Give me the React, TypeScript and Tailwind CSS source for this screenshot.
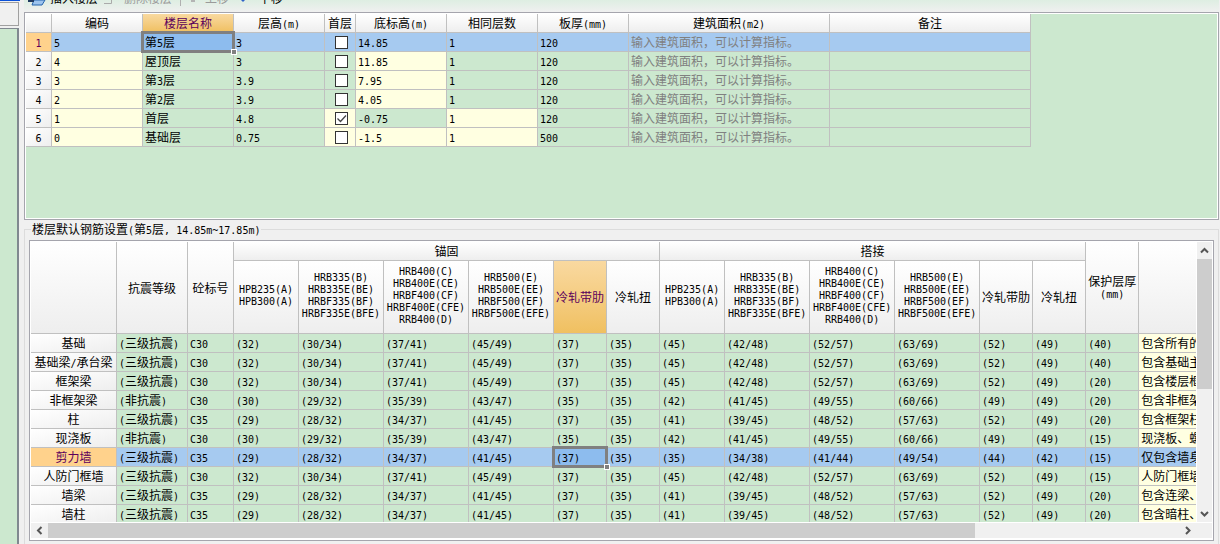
import React, { useState } from 'react';
import clsx from 'clsx';

interface Floor {
    code: string;
    name: string;
    height: string;
    isFirst: boolean;
    bottom: string;
    same: string;
    slab: string;
    editable: string[];
}

interface RebarRow {
    name: string;
    grade: string;
    concrete: string;
    values: string[];
    note: string;
}

const FLOORS: Floor[] = [
    { code: '5', name: '第5层', height: '3', isFirst: false, bottom: '14.85', same: '1', slab: '120', editable: [] },
    { code: '4', name: '屋顶层', height: '3', isFirst: false, bottom: '11.85', same: '1', slab: '120', editable: ['code', 'bottom'] },
    { code: '3', name: '第3层', height: '3.9', isFirst: false, bottom: '7.95', same: '1', slab: '120', editable: ['code', 'bottom'] },
    { code: '2', name: '第2层', height: '3.9', isFirst: false, bottom: '4.05', same: '1', slab: '120', editable: ['code', 'bottom'] },
    { code: '1', name: '首层', height: '4.8', isFirst: true, bottom: '-0.75', same: '1', slab: '120', editable: ['code', 'isFirst', 'same'] },
    { code: '0', name: '基础层', height: '0.75', isFirst: false, bottom: '-1.5', same: '1', slab: '500', editable: ['code', 'isFirst', 'bottom', 'same'] },
];

const A = ['(32)', '(30/34)', '(37/41)', '(45/49)', '(37)', '(35)', '(45)', '(42/48)', '(52/57)', '(63/69)', '(52)', '(49)'];
const B = ['(30)', '(29/32)', '(35/39)', '(43/47)', '(35)', '(35)', '(42)', '(41/45)', '(49/55)', '(60/66)', '(49)', '(49)'];
const C = ['(29)', '(28/32)', '(34/37)', '(41/45)', '(37)', '(35)', '(41)', '(39/45)', '(48/52)', '(57/63)', '(52)', '(49)'];
const WALL = ['(29)', '(28/32)', '(34/37)', '(41/45)', '(37)', '(35)', '(35)', '(34/38)', '(41/44)', '(49/54)', '(44)', '(42)'];

const REBAR: RebarRow[] = [
    { name: '基础', grade: '(三级抗震)', concrete: 'C30', values: [...A, '(40)'], note: '包含所有的' },
    { name: '基础梁/承台梁', grade: '(三级抗震)', concrete: 'C30', values: [...A, '(40)'], note: '包含基础主' },
    { name: '框架梁', grade: '(三级抗震)', concrete: 'C30', values: [...A, '(20)'], note: '包含楼层框' },
    { name: '非框架梁', grade: '(非抗震)', concrete: 'C30', values: [...B, '(20)'], note: '包含非框架' },
    { name: '柱', grade: '(三级抗震)', concrete: 'C35', values: [...C, '(20)'], note: '包含框架柱' },
    { name: '现浇板', grade: '(非抗震)', concrete: 'C30', values: [...B, '(15)'], note: '现浇板、螺' },
    { name: '剪力墙', grade: '(三级抗震)', concrete: 'C35', values: [...WALL, '(15)'], note: '仅包含墙身' },
    { name: '人防门框墙', grade: '(三级抗震)', concrete: 'C30', values: [...A, '(15)'], note: '人防门框墙' },
    { name: '墙梁', grade: '(三级抗震)', concrete: 'C35', values: [...C, '(20)'], note: '包含连梁、' },
    { name: '墙柱', grade: '(三级抗震)', concrete: 'C35', values: [...C, '(20)'], note: '包含暗柱、' },
];

const STEELS = [
    ['HPB235(A)', 'HPB300(A)'],
    ['HRB335(B)', 'HRB335E(BE)', 'HRBF335(BF)', 'HRBF335E(BFE)'],
    ['HRB400(C)', 'HRB400E(CE)', 'HRBF400(CF)', 'HRBF400E(CFE)', 'RRB400(D)'],
    ['HRB500(E)', 'HRB500E(EE)', 'HRBF500(EF)', 'HRBF500E(EFE)'],
    ['冷轧带肋'],
    ['冷轧扭'],
];

const HEAD = 'border-r border-b border-[#c0c0c0] p-0 font-normal';
const PLAIN_HEAD = 'bg-linear-to-b from-white to-[#eeeeee]';
const ACTIVE_HEAD = 'bg-linear-to-b from-[#f9d9a0] to-[#f0c060] text-[#5b005b]';
const ROW_HEAD = 'bg-linear-to-br from-white to-[#eeeeee]';
const ACTIVE_ROW_HEAD = 'bg-[#ffd28c] text-[#5b005b]';
const CELL = 'h-[19px] border-r border-b border-[#c0c0c0] py-0 pr-0 pl-0.5 whitespace-nowrap';

// Chinese runs are 12px wide per glyph, latin runs half of that
const Text = ({ children }: { children: string }) => (
    <>
        {children.split(/([\x20-\x7e]+)/).filter(Boolean).map((part, i) =>
            /^[\x20-\x7e]/.test(part) ? (
                <span key={i} className="font-['DejaVu_Sans_Mono',monospace] text-[10px] leading-none whitespace-pre">{part}</span>
            ) : (
                <span key={i}>{part}</span>
            )
        )}
    </>
);

const ActiveFrame = () => (
    <>
        <span className="pointer-events-none absolute -inset-0.5 z-10 border-3 border-[#808080]" />
        <span className="pointer-events-none absolute -right-1 -bottom-1 z-10 size-1.5 border border-white bg-[#808080]" />
    </>
);

const Chevron = ({ d }: { d: string }) => (
    <svg width="9" height="9" viewBox="0 0 9 9" fill="none" stroke="#555" strokeWidth="2">
        <path d={d} />
    </svg>
);

const Toolbar = () => (
    <div className="flex h-3 shrink-0 items-end overflow-hidden bg-linear-to-b from-[#deeee2] to-[#f0f0f0] pb-1.5 pl-1 leading-4">
        <button className="flex h-4 items-end gap-1">
            <svg width="18" height="14" viewBox="0 0 18 14">
                <path d="M7 2h9l-3 5H4z" fill="#dcebfa" stroke="#2465ad" />
                <path d="M6 8h11l-3 5H4z" fill="#9cc4ee" stroke="#2465ad" />
                <path d="M0 8h6v2H0z" fill="#203a60" />
            </svg>
            <span>插入楼层</span>
        </button>
        <button className="ml-1.5 flex h-4 items-end gap-3 text-[#9a9a9a]">
            <svg width="8" height="14" viewBox="0 0 8 14">
                <path d="M0 11.500h7.500V2" fill="none" stroke="#aaa" />
            </svg>
            <span>删除楼层</span>
        </button>
        <span className="mr-2 ml-2 h-4 w-px shrink-0 bg-[#b0b0b0]" />
        <button className="flex h-4 items-end gap-2 text-[#9a9a9a]">
            <svg width="8" height="14" viewBox="0 0 8 14">
                <path d="M2 2h4v8H2z" fill="#b4b4b4" />
            </svg>
            <span>上移</span>
        </button>
        <button className="ml-2.5 flex h-4 items-end gap-3">
            <svg width="8" height="14" viewBox="0 0 8 14">
                <path d="M2 0h4v6h2l-4 4-4-4h2z" fill="#2f62c8" />
            </svg>
            <span>下移</span>
        </button>
    </div>
);

const FloorTable = () => {
    const [floors, setFloors] = useState<Floor[]>(FLOORS);
    const heads = ['编码', '楼层名称', '层高(m)', '首层', '底标高(m)', '相同层数', '板厚(mm)', '建筑面积(m2)', '备注'];

    const handleToggle = (index: number) => {
        setFloors(floors.map((f, i) => ({ ...f, isFirst: i === index })));
    };

    return (
        <div className="h-52 shrink-0 overflow-hidden border border-[#a5a5ad] bg-white p-px">
            <div className="h-full bg-[#cce8cf]">
                <table className="w-[1005px] table-fixed border-separate border-spacing-0 leading-4">
                    <colgroup>
                        <col className="w-[26px]" />
                        <col className="w-[91px]" />
                        <col className="w-[91px]" />
                        <col className="w-[91px]" />
                        <col className="w-[31px]" />
                        <col className="w-[91px]" />
                        <col className="w-[91px]" />
                        <col className="w-[91px]" />
                        <col className="w-[201px]" />
                        <col className="w-[201px]" />
                    </colgroup>
                    <thead>
                        <tr>
                            <th className={clsx(HEAD, PLAIN_HEAD, 'h-[19px]')}></th>
                            {heads.map((head, i) => (
                                <th key={head} className={clsx(HEAD, 'h-[19px]', i === 1 ? ACTIVE_HEAD : PLAIN_HEAD)}>
                                    <Text>{head}</Text>
                                </th>
                            ))}
                        </tr>
                    </thead>
                    <tbody>
                        {floors.map((floor, i) => {
                            const bg = (key: string) =>
                                i === 0 ? 'bg-[#a6caf0]' : floor.editable.includes(key) ? 'bg-[#ffffe1]' : 'bg-[#cce8cf]';
                            return (
                                <tr key={floor.code}>
                                    <th className={clsx(HEAD, i === 0 ? ACTIVE_ROW_HEAD : ROW_HEAD)}>
                                        <Text>{String(i + 1)}</Text>
                                    </th>
                                    <td className={clsx(CELL, bg('code'))}><Text>{floor.code}</Text></td>
                                    <td className={clsx(CELL, i === 0 ? 'relative bg-[#8dbcee]' : bg('name'))}>
                                        <Text>{floor.name}</Text>
                                        {i === 0 && <ActiveFrame />}
                                    </td>
                                    <td className={clsx(CELL, bg('height'))}><Text>{floor.height}</Text></td>
                                    <td className={clsx(CELL, bg('isFirst'))}>
                                        <label className="grid place-items-center">
                                            <input
                                                type="checkbox"
                                                aria-label={`${floor.name} 首层`}
                                                checked={floor.isFirst}
                                                onChange={() => handleToggle(i)}
                                                className="col-start-1 row-start-1 size-[13px] appearance-none border border-[#333] bg-white"
                                            />
                                            {floor.isFirst && (
                                                <svg className="pointer-events-none col-start-1 row-start-1" width="13" height="13" viewBox="0 0 13 13">
                                                    <path d="M2.500 6.500l3 3 5.500-6" fill="none" stroke="#444" strokeWidth="1.300" />
                                                </svg>
                                            )}
                                        </label>
                                    </td>
                                    <td className={clsx(CELL, bg('bottom'))}><Text>{floor.bottom}</Text></td>
                                    <td className={clsx(CELL, bg('same'))}><Text>{floor.same}</Text></td>
                                    <td className={clsx(CELL, bg('slab'))}><Text>{floor.slab}</Text></td>
                                    <td className={clsx(CELL, bg('area'), 'text-[#808080]')}>输入建筑面积，可以计算指标。</td>
                                    <td className={clsx(CELL, bg('note'))}></td>
                                </tr>
                            );
                        })}
                    </tbody>
                </table>
            </div>
        </div>
    );
};

const RebarTable = () => (
    <table className="w-full table-fixed border-separate border-spacing-0 leading-4">
        <colgroup>
            <col className="w-[86px]" />
            <col className="w-[71px]" />
            <col className="w-[46px]" />
            <col className="w-[65px]" />
            <col className="w-[85px]" />
            <col className="w-[85px]" />
            <col className="w-[85px]" />
            <col className="w-[53px]" />
            <col className="w-[53px]" />
            <col className="w-[65px]" />
            <col className="w-[85px]" />
            <col className="w-[85px]" />
            <col className="w-[85px]" />
            <col className="w-[53px]" />
            <col className="w-[53px]" />
            <col className="w-[53px]" />
            <col />
        </colgroup>
        <thead className="leading-3">
            <tr>
                <th rowSpan={2} className={clsx(HEAD, PLAIN_HEAD)}></th>
                <th rowSpan={2} className={clsx(HEAD, PLAIN_HEAD)}>抗震等级</th>
                <th rowSpan={2} className={clsx(HEAD, PLAIN_HEAD)}>砼标号</th>
                <th colSpan={6} className={clsx(HEAD, PLAIN_HEAD, 'h-[19px]')}>锚固</th>
                <th colSpan={6} className={clsx(HEAD, PLAIN_HEAD, 'h-[19px]')}>搭接</th>
                <th rowSpan={2} className={clsx(HEAD, PLAIN_HEAD)}>保护层厚<br /><Text>(mm)</Text></th>
                <th rowSpan={2} className={clsx(HEAD, PLAIN_HEAD, 'border-r-0')}></th>
            </tr>
            <tr>
                {[...STEELS, ...STEELS].map((lines, i) => (
                    <th key={i} className={clsx(HEAD, 'h-[73px] whitespace-nowrap', i === 4 ? ACTIVE_HEAD : PLAIN_HEAD)}>
                        {lines.map(line => (
                            <div key={line} className="flex h-3 justify-center"><Text>{line}</Text></div>
                        ))}
                    </th>
                ))}
            </tr>
        </thead>
        <tbody>
            {REBAR.map(row => {
                const active = row.name === '剪力墙';
                const bg = active ? 'bg-[#a6caf0]' : 'bg-[#cce8cf]';
                return (
                    <tr key={row.name}>
                        <th className={clsx(HEAD, 'whitespace-nowrap', active ? ACTIVE_ROW_HEAD : ROW_HEAD)}>
                            <Text>{row.name}</Text>
                        </th>
                        <td className={clsx(CELL, bg)}><Text>{row.grade}</Text></td>
                        <td className={clsx(CELL, bg)}><Text>{row.concrete}</Text></td>
                        {row.values.map((value, i) => (
                            <td key={i} className={clsx(CELL, active && i === 4 ? 'relative bg-[#8dbcee]' : bg)}>
                                <Text>{value}</Text>
                                {active && i === 4 && <ActiveFrame />}
                            </td>
                        ))}
                        <td className={clsx(CELL, 'overflow-hidden border-r-0', active ? 'bg-[#a6caf0]' : 'bg-[#ffffe1]')}>{row.note}</td>
                    </tr>
                );
            })}
        </tbody>
    </table>
);

const App = () => (
    <div className="flex h-screen overflow-hidden bg-[#f0f0f0] font-['Noto_Sans_CJK_SC',sans-serif] text-xs text-black">
        <aside className="flex w-5 shrink-0 flex-col border-t border-[#0a50d8]">
            <div className="mt-px h-6 w-[19px] border-y border-r border-[#a0a0a0] bg-[#f0f0f0]" />
            <div className="mt-0.5 w-[19px] flex-1 border-t border-r-2 border-[#808890] bg-[#cce8cf]" />
        </aside>
        <main className="flex min-w-0 flex-1 flex-col pr-px pl-1">
            <Toolbar />
            <FloorTable />
            <fieldset className="mt-0.5 flex min-h-0 min-w-0 flex-1 flex-col border-x border-t border-[#dcdcdc] px-1 pt-1 pb-[3px]">
                <legend className="ml-0.5 px-px leading-[14px]">
                    <Text>楼层默认钢筋设置(第5层, 14.85m~17.85m)</Text>
                </legend>
                <div className="grid min-h-0 flex-1 grid-cols-[minmax(0,1fr)_16px] grid-rows-[minmax(0,1fr)_16px] gap-y-px border border-[#a5a5ad] bg-white p-px">
                    <div className="overflow-hidden">
                        <RebarTable />
                    </div>
                    <div className="ml-px flex flex-col bg-[#f0f0f0]">
                        <button aria-label="向上滚动" className="grid h-[17px] shrink-0 place-items-center">
                            <Chevron d="M1 6.500l3.500-3.500 3.500 3.500" />
                        </button>
                        <div className="flex-1">
                            <div className="h-[53%] bg-[#cdcdcd]" />
                        </div>
                        <button aria-label="向下滚动" className="grid h-[17px] shrink-0 place-items-center">
                            <Chevron d="M1 3l3.500 3.500 3.500-3.500" />
                        </button>
                    </div>
                    <div className="mb-px flex bg-[#f0f0f0]">
                        <button aria-label="向左滚动" className="grid w-[17px] shrink-0 place-items-center">
                            <Chevron d="M6.500 1l-3.500 3.500 3.500 3.500" />
                        </button>
                        <div className="flex-1">
                            <div className="h-full w-[82%] bg-[#cdcdcd]" />
                        </div>
                        <button aria-label="向右滚动" className="grid w-[17px] shrink-0 place-items-center">
                            <Chevron d="M3 1l3.500 3.500-3.500 3.500" />
                        </button>
                    </div>
                    <div className="mb-px bg-[#f0f0f0]" />
                </div>
            </fieldset>
        </main>
    </div>
);

export default App;
